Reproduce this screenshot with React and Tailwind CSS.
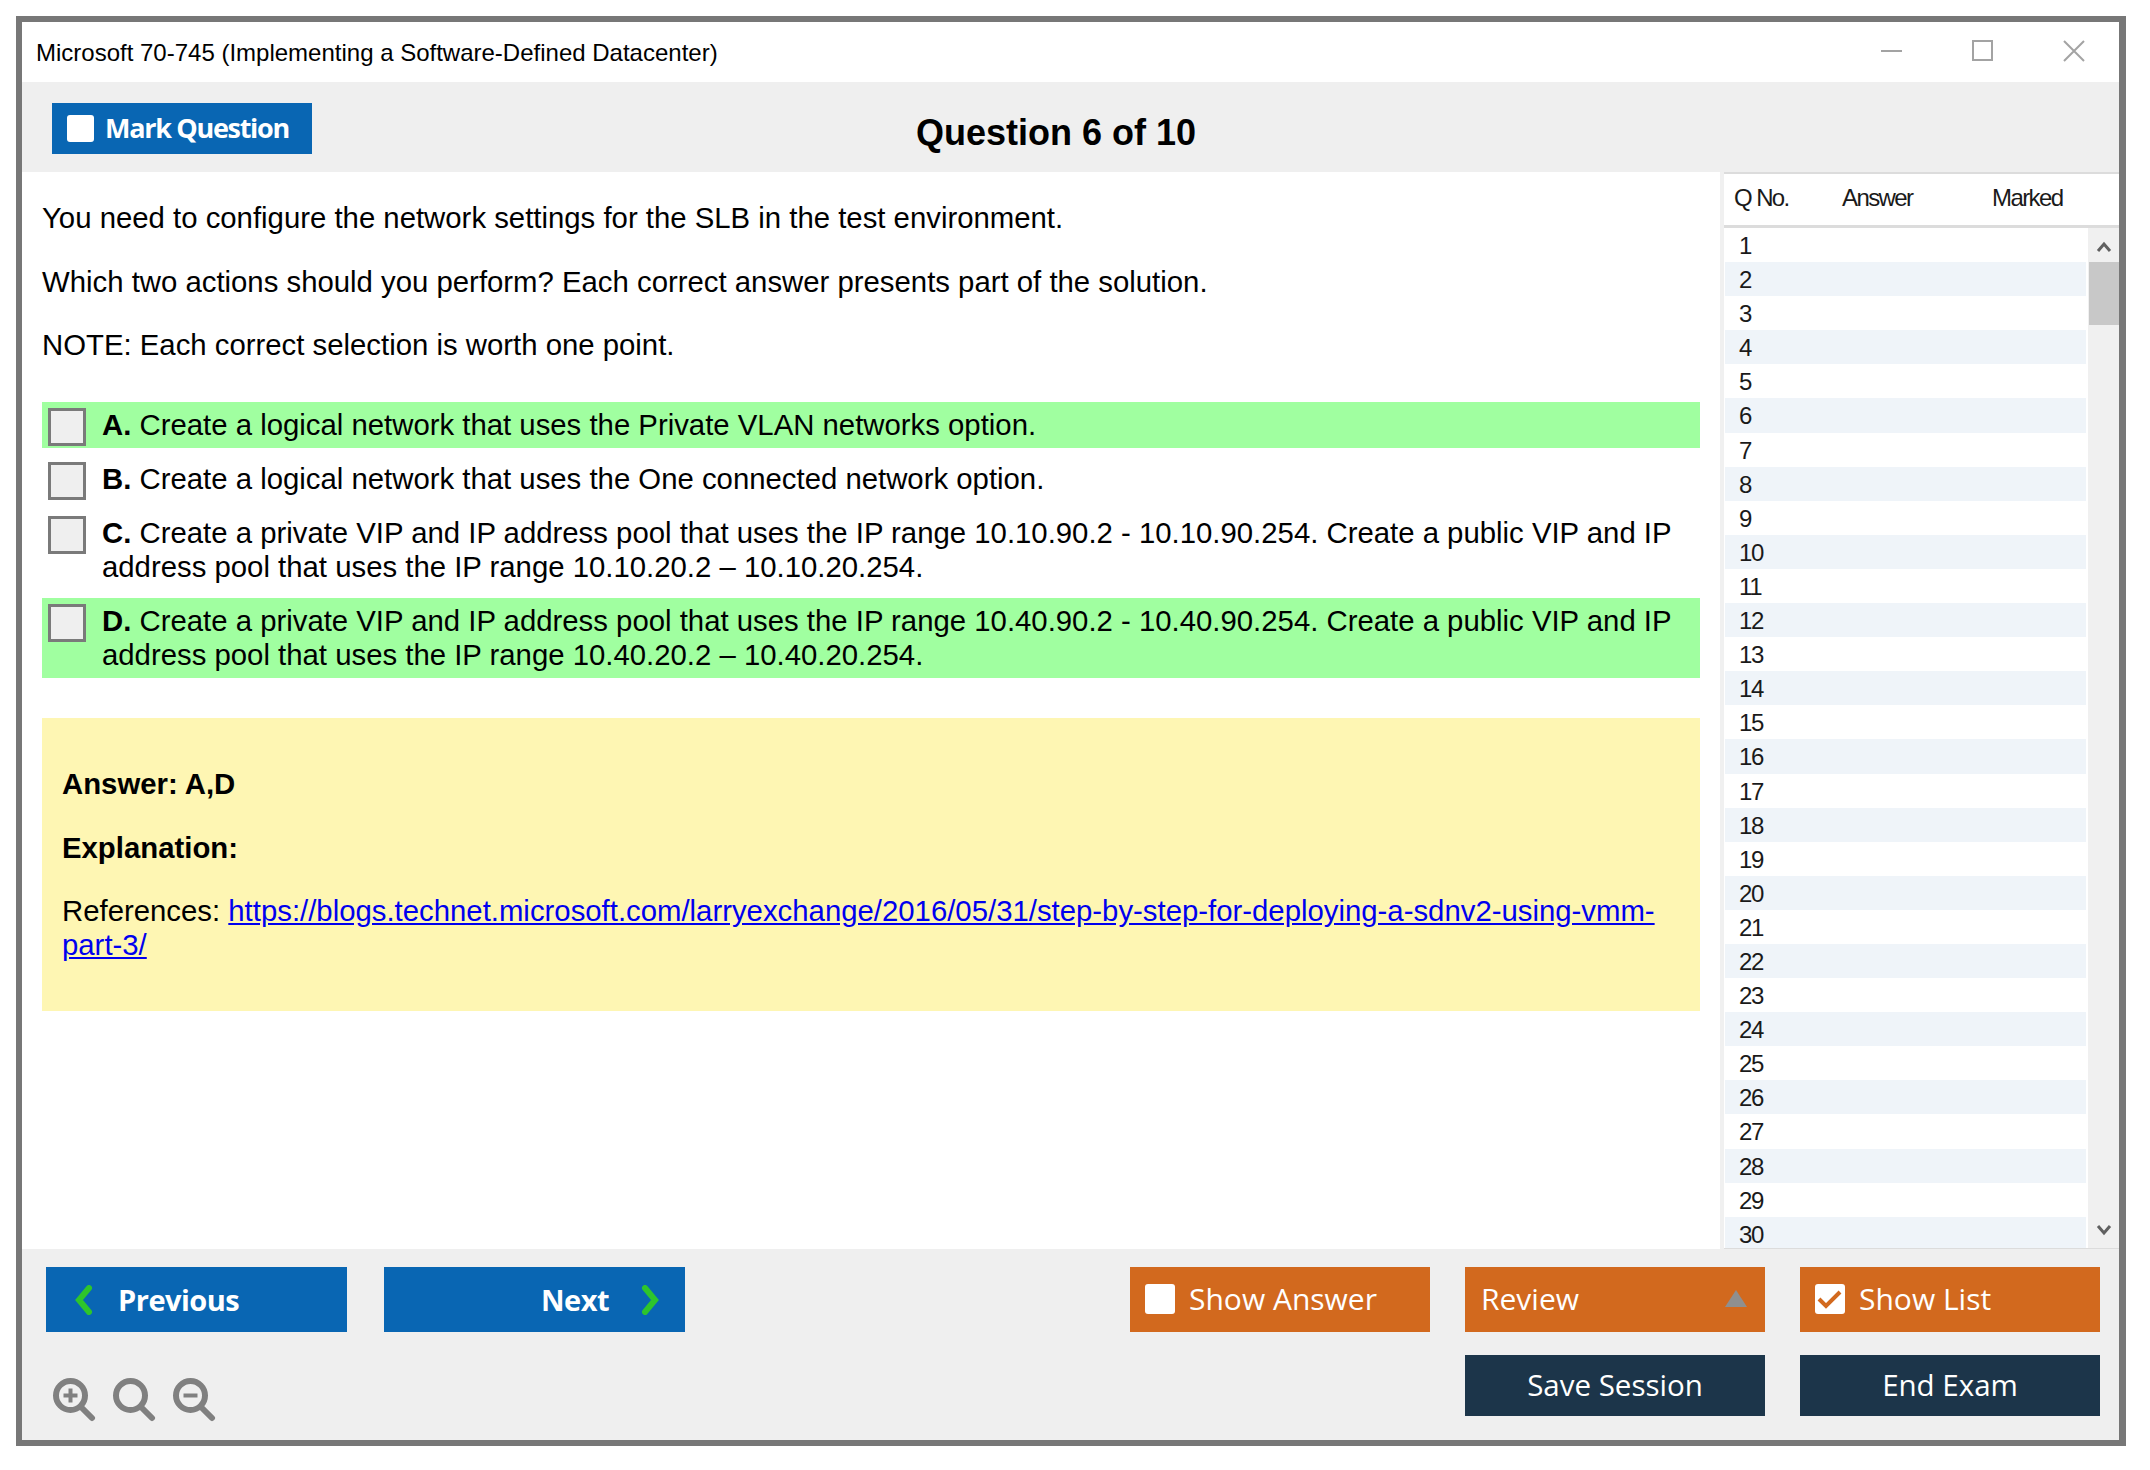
const options = [
  { letter: "A.", text: "Create a logical network that uses the Private VLAN networks option.", correct: true },
  { letter: "B.", text: "Create a logical network that uses the One connected network option." },
  {
    letter: "C.",
    text: "Create a private VIP and IP address pool that uses the IP range 10.10.90.2 - 10.10.90.254. Create a public VIP and IP address pool that uses the IP range 10.10.20.2 – 10.10.20.254.",
  },
  {
    letter: "D.",
    text: "Create a private VIP and IP address pool that uses the IP range 10.40.90.2 - 10.40.90.254. Create a public VIP and IP address pool that uses the IP range 10.40.20.2 – 10.40.20.254.",
    correct: true,
  },
];

const rows = Array.from({ length: 30 }, (_, i) => i + 1);

function Chevron({ flip }) {
  return (
    <svg width="20" height="30" viewBox="0 0 20 30" className={flip ? "rotate-180" : ""}>
      <polyline points="15,3 5,15 15,27" fill="none" stroke="#2ec52c" strokeWidth="6" strokeLinecap="round" strokeLinejoin="miter" />
    </svg>
  );
}

function Magnifier({ mark }) {
  return (
    <svg width="44" height="44" viewBox="0 0 44 44" fill="none" stroke="#808080">
      <circle cx="17.5" cy="17.5" r="14.5" strokeWidth="6" />
      <line x1="28" y1="29" x2="39" y2="40" strokeWidth="6" strokeLinecap="round" />
      {mark !== "none" && <line x1="10.5" y1="17.5" x2="24.5" y2="17.5" strokeWidth="4" />}
      {mark === "plus" && <line x1="17.5" y1="10.5" x2="17.5" y2="24.5" strokeWidth="4" />}
    </svg>
  );
}

function FooterButton({ color, className, children }) {
  return (
    <div className={`w-[300px] flex items-center text-white text-[30px] font-['Open_Sans',sans-serif] pb-[2px] ${color} ${className || ""}`}>
      {children}
    </div>
  );
}

function App() {
  return (
    <div className="w-[2150px] h-[1470px] bg-white pt-4 pl-4 font-['Liberation_Sans',Arial,sans-serif] text-black">
      <div className="w-[2110px] h-[1430px] box-border border-[6px] border-r-[7px] border-[#777777] flex flex-col">
        {/* title bar */}
        <div className="h-[60px] flex items-center bg-white">
          <span className="ml-[14px] mt-[2px] text-[24px] mr-auto">Microsoft 70-745 (Implementing a Software-Defined Datacenter)</span>
          <svg width="21" height="21" viewBox="0 0 21 21" stroke="#a3a3a3" strokeWidth="2" fill="none" className="mb-[3px]">
            <line x1="0" y1="11" x2="21" y2="11" />
          </svg>
          <svg width="21" height="21" viewBox="0 0 21 21" stroke="#a3a3a3" strokeWidth="2" fill="none" className="ml-[70px] mb-[3px]">
            <rect x="1" y="1" width="19" height="19" />
          </svg>
          <svg width="22" height="22" viewBox="0 0 22 22" stroke="#a3a3a3" strokeWidth="2" fill="none" className="ml-[70px] mr-[34px] mb-[3px]">
            <path d="M1 1 L21 21 M21 1 L1 21" />
          </svg>
        </div>

        {/* toolbar */}
        <div className="h-[90px] bg-[#efefef] flex items-start">
          <div className="ml-[30px] mt-[21px] w-[260px] h-[51px] bg-[#0966b3] flex items-center text-white">
            <div className="ml-[15px] w-[27px] h-[27px] bg-white rounded-[3px]" />
            <span className="ml-[11px] text-[27px] font-bold tracking-[-1.3px] font-['Open_Sans',sans-serif]">Mark Question</span>
          </div>
          <h1 className="ml-[604px] mt-[31px] text-[36px] leading-[40px] font-bold">Question 6 of 10</h1>
        </div>

        {/* body */}
        <div className="h-[1077px] flex">
          <div className="w-[1702px] pl-5 pr-5 pt-[29px] border-r-4 border-[#f0f0f0] text-[29.33px] leading-[34px]">
            <p className="mb-[30px]">You need to configure the network settings for the SLB in the test environment.</p>
            <p className="mb-[29px]">Which two actions should you perform? Each correct answer presents part of the solution.</p>
            <p className="mb-[40px]">NOTE: Each correct selection is worth one point.</p>

            <div className="flex flex-col gap-2">
              {options.map((o) => (
                <div key={o.letter} className={`flex items-start pt-[6px] pb-[2px] pl-[6px] ${o.correct ? "bg-[#a0ffa0]" : ""}`}>
                  <div className="w-[38px] h-[38px] shrink-0 box-border border-[3px] border-[#7a7a7a] bg-[#efefef]" />
                  <div className="ml-4 pb-1">
                    <b>{o.letter}</b> {o.text}
                  </div>
                </div>
              ))}
            </div>

            <div className="mt-10 bg-[#fef6b3] pt-[49px] pb-[49px] px-5">
              <p className="font-bold mb-[30px]">Answer: A,D</p>
              <p className="font-bold mb-[29px]">Explanation:</p>
              <p>
                References:{" "}
                <span className="text-[#0000ee] underline">
                  https://blogs.technet.microsoft.com/larryexchange/2016/05/31/step-by-step-for-deploying-a-sdnv2-using-vmm-part-3/
                </span>
              </p>
            </div>
          </div>

          {/* question list */}
          <div className="flex-1 flex flex-col min-w-0 text-[24px] tracking-[-1.3px] text-[#1a1a1a]">
            <div className="h-[56px] shrink-0 border-t-2 border-b-[3px] border-[#dcdcdc] flex items-center pb-[3px] tracking-[-1.6px]">
              <span className="ml-[10px] w-[108px]">Q No.</span>
              <span className="w-[150px]">Answer</span>
              <span>Marked</span>
            </div>
            <div className="flex-1 flex min-h-0 border-b border-[#dcdcdc]">
              <div className="flex-1 overflow-hidden pl-px">
                {rows.map((n) => (
                  <div key={n} className={`h-[34.1px] leading-[36px] pl-[14px] ${n % 2 === 0 ? "bg-[#eff4f9]" : "bg-white"}`}>
                    {n}
                  </div>
                ))}
              </div>
              <div className="w-[31px] ml-[2px] bg-[#f0f0f0] flex flex-col items-center">
                <svg width="16" height="34" viewBox="0 0 16 34" fill="none" stroke="#606060" strokeWidth="3">
                  <polyline points="2,23 8,16 14,23" />
                </svg>
                <div className="w-[30px] h-[63px] bg-[#c8c8c8]" />
                <svg width="16" height="34" viewBox="0 0 16 34" fill="none" stroke="#606060" strokeWidth="3" className="mt-auto">
                  <polyline points="2,12 8,19 14,12" />
                </svg>
              </div>
            </div>
          </div>
        </div>

        {/* footer */}
        <div className="flex-1 bg-[#efefef] pt-[18px] pl-6 pr-[19px]">
          <div className="flex h-[65px]">
            <div className="w-[301px] bg-[#0966b3] flex items-center pl-[28px] text-white text-[29px] font-bold tracking-[-0.5px] font-['Open_Sans',sans-serif]">
              <Chevron />
              <span className="ml-[24px]">Previous</span>
            </div>
            <div className="ml-[37px] w-[301px] bg-[#0966b3] flex items-center justify-end pr-[25px] text-white text-[29px] font-bold tracking-[-0.5px] font-['Open_Sans',sans-serif]">
              <span className="mr-[31px]">Next</span>
              <Chevron flip />
            </div>

            <FooterButton color="bg-[#d2691e]" className="ml-auto">
              <div className="ml-[15px] w-[30px] h-[30px] bg-white rounded-[3px]" />
              <span className="ml-[14px]">Show Answer</span>
            </FooterButton>
            <FooterButton color="bg-[#d2691e]" className="ml-[35px] pl-4 pr-[18px] justify-between">
              <span>Review</span>
              <div className="w-0 h-0 border-l-[11px] border-r-[11px] border-b-[17px] border-l-transparent border-r-transparent border-b-[#8f8f8f]" />
            </FooterButton>
            <FooterButton color="bg-[#d2691e]" className="ml-[35px]">
              <div className="ml-[15px] w-[30px] h-[30px] bg-white rounded-[3px] flex items-center justify-center">
                <svg width="30" height="30" viewBox="0 0 30 30" fill="none" stroke="#d2691e" strokeWidth="4">
                  <polyline points="4,15 11,22 25,8" />
                </svg>
              </div>
              <span className="ml-[14px]">Show List</span>
            </FooterButton>
          </div>

          <div className="flex items-start mt-[23px]">
            <div className="flex gap-4 mt-[23px] ml-[7px]">
              <Magnifier mark="plus" />
              <Magnifier mark="none" />
              <Magnifier mark="minus" />
            </div>
            <div className="ml-auto w-[300px] h-[61px] bg-[#1c354a] text-white text-[29.5px] font-['Open_Sans',sans-serif] flex items-center justify-center">
              Save Session
            </div>
            <div className="ml-[35px] w-[300px] h-[61px] bg-[#1c354a] text-white text-[29.5px] font-['Open_Sans',sans-serif] flex items-center justify-center">
              End Exam
            </div>
          </div>
        </div>
      </div>
    </div>
  );
}

export default App;
